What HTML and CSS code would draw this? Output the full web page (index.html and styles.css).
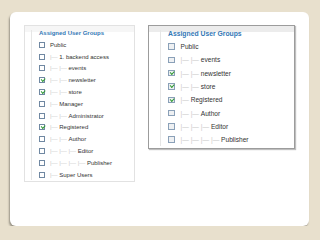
FILE: index.html
```html
<!DOCTYPE html>
<html lang="en">
<head>
  <meta charset="UTF-8" />
  <title>Assigned User Groups</title>
  <link rel="stylesheet" href="styles.css">
</head>
<body>
  <div class="card">
    <div class="panel small">
      <div class="strip"></div>
      <div class="groups">
        <div class="legend">Assigned User Groups</div>
        <ul>
          <li><span class="cb"></span>Public</li>
          <li><span class="cb"></span><span class="gi">|&mdash; </span>1. backend access</li>
          <li><span class="cb"></span><span class="gi">|&mdash; |&mdash; </span>events</li>
          <li><span class="cb on"></span><span class="gi">|&mdash; |&mdash; </span>newsletter</li>
          <li><span class="cb on"></span><span class="gi">|&mdash; |&mdash; </span>store</li>
          <li><span class="cb"></span><span class="gi">|&mdash; </span>Manager</li>
          <li><span class="cb"></span><span class="gi">|&mdash; |&mdash; </span>Administrator</li>
          <li><span class="cb on"></span><span class="gi">|&mdash; </span>Registered</li>
          <li><span class="cb"></span><span class="gi">|&mdash; |&mdash; </span>Author</li>
          <li><span class="cb"></span><span class="gi">|&mdash; |&mdash; |&mdash; </span>Editor</li>
          <li><span class="cb"></span><span class="gi">|&mdash; |&mdash; |&mdash; |&mdash; </span>Publisher</li>
          <li><span class="cb"></span><span class="gi">|&mdash; </span>Super Users</li>
        </ul>
      </div>
    </div>

    <div class="panel big">
      <div class="strip"></div>
      <div class="groups">
        <div class="legend">Assigned User Groups</div>
        <ul>
          <li><span class="cb"></span>Public</li>
          <li><span class="cb"></span><span class="gi">|&mdash; |&mdash; </span>events</li>
          <li><span class="cb on"></span><span class="gi">|&mdash; |&mdash; </span>newsletter</li>
          <li><span class="cb on"></span><span class="gi">|&mdash; |&mdash; </span>store</li>
          <li><span class="cb on"></span><span class="gi">|&mdash; </span>Registered</li>
          <li><span class="cb"></span><span class="gi">|&mdash; |&mdash; </span>Author</li>
          <li><span class="cb"></span><span class="gi">|&mdash; |&mdash; |&mdash; </span>Editor</li>
          <li><span class="cb"></span><span class="gi">|&mdash; |&mdash; |&mdash; |&mdash; </span>Publisher</li>
        </ul>
      </div>
    </div>
  </div>
</body>
</html>
```

FILE: styles.css
```css
:root{
  --bg:#e8e0cd;
  --text:#333;
  --tree:#c9c9c9;
  --blue:#3277b5;
  --check:#2f9a34;
}
*{box-sizing:border-box;margin:0;padding:0}
body{background:var(--bg);font-family:"Liberation Sans",Arial,sans-serif;color:var(--text)}

.card{margin:12px 11px 0 10px;width:299px;height:214px;background:#fff;border-radius:6px;box-shadow:-1px 2px 2px rgba(0,0,0,0.35);padding:13px 0 0 14px;display:flex;align-items:flex-start;gap:13px}

.panel{background:#fff}
.panel .strip{height:6px;background:#f6f6f6}
.groups{border-left:1px solid #e6e6e6}
.legend{font-weight:bold;color:var(--blue);white-space:nowrap}
ul{list-style:none}
li{display:flex;align-items:center;white-space:nowrap}
.gi{color:var(--tree);white-space:pre}
.cb{position:relative;flex:none;border:1px solid #7088a2;background:#fff}
.cb.on::after{content:"";position:absolute;left:1px;top:0;width:3px;height:1.5px;border-left:1.2px solid var(--check);border-bottom:1.2px solid var(--check);transform:rotate(-45deg)}

/* small (original) panel */
.small{width:111px;height:157px;border:1px solid #e2e2e2;padding-left:6px}
.small .strip{margin-left:-6px}
.small .groups{padding-left:7px;height:150px}
.small .legend{font-size:6px;line-height:6px;margin:-2px 0 3px}
.small li{height:11.8px;font-size:6px}
.small .cb{width:6px;height:6px;margin-right:5px}

/* zoomed panel */
.big{width:147px;height:124px;border:1px solid #9c9c9c;box-shadow:1px 1px 1px rgba(0,0,0,0.25);padding-left:11px}
.big .strip{margin-left:-11px;background:#ececec}
.big .groups{padding-left:7px;height:116px}
.big .legend{font-size:6.8px;line-height:7px;margin:-2px 0 3px}
.big li{height:13.3px;font-size:6.6px}
.big .cb{width:6.5px;height:6.5px;margin-right:6px;background:#eef0f2;border-color:#8aa0b8}
```
